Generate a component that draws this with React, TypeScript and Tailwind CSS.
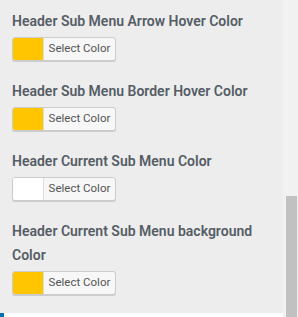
import React from 'react';

type Item = { label: string; color: string };

const items: Item[] = [
  { label: 'Header Sub Menu Arrow Hover Color', color: '#ffc600' },
  { label: 'Header Sub Menu Border Hover Color', color: '#ffc600' },
  { label: 'Header Current Sub Menu Color', color: '#ffffff' },
  { label: 'Header Current Sub Menu background Color', color: '#ffc600' },
];

const ColorButton: React.FC<{ color: string }> = ({ color }) => (
  <button
    type="button"
    className="flex h-6 w-[104px] items-stretch overflow-hidden rounded-[3px] border border-[#cccccc] bg-[#f7f7f7] p-0 shadow-[0_1px_0_#cccccc]"
  >
    <span className="w-[30px] shrink-0" style={{ backgroundColor: color }} />
    <span className="flex flex-1 items-center justify-center border-l border-[#dddddd] text-[11.5px] text-[#555555]">
      Select Color
    </span>
  </button>
);

export default function App() {
  return (
    <div className="flex h-[317px] w-[298px] overflow-hidden font-['Roboto',sans-serif]">
      <div className="flex flex-1 flex-col bg-[#ededed]">
        <div className="flex-1 px-3 pt-[9px]">
          {items.map((item) => (
            <div key={item.label} className="mb-[18px]">
              <h3 className="mb-1 w-[250px] text-[14px] font-semibold leading-6 text-[#555d66]">
                {item.label}
              </h3>
              <ColorButton color={item.color} />
            </div>
          ))}
        </div>
        <div className="flex h-1 bg-white">
          <div className="w-1 bg-[#0073aa]" />
        </div>
      </div>
      <div className="flex w-[15px] flex-col bg-[#f1f1f1]">
        <div className="h-[196px]" />
        <div className="ml-[3px] w-[11px] flex-1 bg-[#c1c1c1]" />
      </div>
    </div>
  );
}
